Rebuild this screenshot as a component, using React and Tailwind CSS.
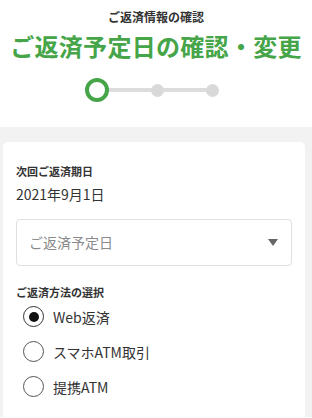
import { useState } from "react";

const methods = ["Web返済", "スマホATM取引", "提携ATM"];

export default function App() {
  const [method, setMethod] = useState(0);

  return (
    <div
      className="min-h-[418px] w-[312px] bg-white text-[#333]"
      style={{ fontFamily: '"Noto Sans CJK JP", "Noto Sans", sans-serif' }}
    >
      <div className="flex flex-col items-center pt-[8px]">
        <div className="text-[12px] font-bold leading-[18px] text-[#333]">ご返済情報の確認</div>
        <h1 className="mt-[4px] text-[24px] font-bold leading-[32px] tracking-[0.3px] text-[#45a548]">
          ご返済予定日の確認・変更
        </h1>
        <div className="relative -ml-[8px] mt-[16px] flex h-[24px] w-[134px] items-center justify-between">
          <div className="absolute left-[12px] right-[6px] top-[10px] h-[4px] bg-[#dcdcdc]" />
          <div className="relative h-[24px] w-[24px] rounded-full border-[4px] border-[#45a548] bg-white" />
          <div className="relative h-[13px] w-[13px] rounded-full bg-[#d9d9d9]" />
          <div className="relative h-[13px] w-[13px] rounded-full bg-[#d9d9d9]" />
        </div>
      </div>

      <div className="mt-[25px] bg-[#f2f2f2] pl-[3px] pr-[7px] pt-[15px]">
        <div className="rounded-t-[5px] bg-white px-[13px] pb-[20px] pt-[20px]">
          <div className="text-[11px] font-bold leading-[18px]">次回ご返済期日</div>
          <div className="mt-[4px] text-[14px] leading-[20px]">2021年9月1日</div>

          <button className="mt-[15px] flex h-[47px] w-full items-center justify-between rounded-[4px] border border-[#e0e0e0] bg-white pl-[12px] pr-[13px] text-left">
            <span className="text-[14px] text-[#8a8a8a]">ご返済予定日</span>
            <svg width="10" height="7" viewBox="0 0 10 7">
              <path d="M0 0h10L5 7z" fill="#666" />
            </svg>
          </button>

          <div className="mt-[17px] text-[11px] font-bold leading-[18px]">ご返済方法の選択</div>
          <div className="mt-[5px] flex flex-col gap-[14px] pl-[7px]">
            {methods.map((m, i) => (
              <label key={m} className="flex h-[21px] cursor-pointer items-center gap-[9px]" onClick={() => setMethod(i)}>
                <span
                  className={
                    "flex h-[21px] w-[21px] items-center justify-center rounded-full border-[1.5px] " +
                    (method === i ? "border-[#333]" : "border-[#555]")
                  }
                >
                  {method === i && <span className="h-[10px] w-[10px] rounded-full bg-[#111]" />}
                </span>
                <span className="text-[14px] leading-[20px] text-[#333]">{m}</span>
              </label>
            ))}
          </div>
        </div>
      </div>
    </div>
  );
}
